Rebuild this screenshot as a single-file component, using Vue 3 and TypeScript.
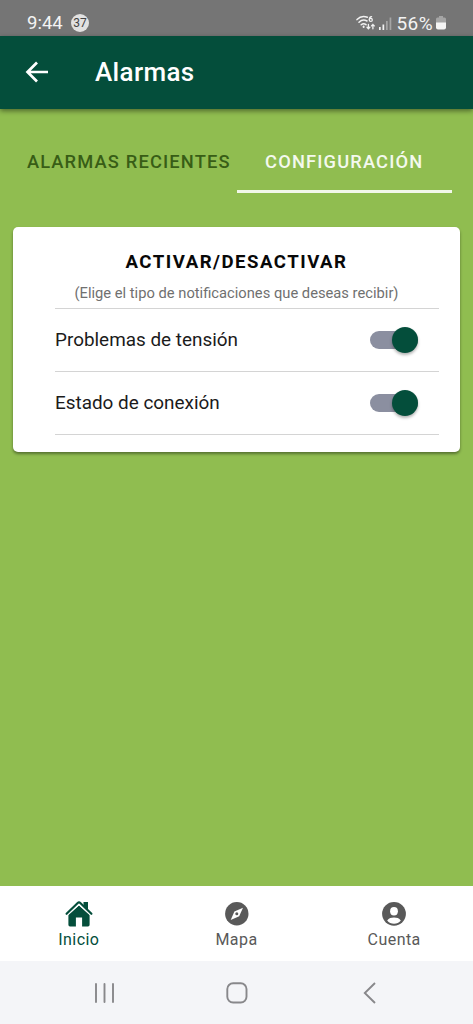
<script setup lang="ts">
import { ref } from 'vue'

interface Setting {
  id: string
  label: string
  enabled: boolean
}

const tabs = ['Alarmas recientes', 'Configuración']
const activeTab = ref(1)

const settings = ref<Setting[]>([
  { id: 'tension', label: 'Problemas de tensión', enabled: true },
  { id: 'conexion', label: 'Estado de conexión', enabled: true },
])

const navItems = [
  { id: 'home', label: 'Inicio' },
  { id: 'map', label: 'Mapa' },
  { id: 'account', label: 'Cuenta' },
]
const activeNav = ref('home')
</script>

<template>
  <div class="screen">
    <div class="status">
      <span class="clock">9:44</span>
      <span class="count">37</span>
      <svg class="wifi" width="20" height="16" viewBox="0 0 20 16" fill="none" stroke="#f2f2f2" stroke-width="1.5" stroke-linecap="round">
        <path d="M1 4.6C4 1.4 8 .9 11.4 2.3M3 7.3C5.400 4.900 8.700 4.700 11 6M5.200 9.800C6.600 8.600 8.600 8.600 10 9.700" />
        <path d="M7.600 11.600v.4" stroke-width="2" />
        <path d="M15.600 1.600C14.200 1.700 13.300 3 13.400 4.600" stroke-width="1.300" />
        <circle cx="14.800" cy="4.900" r="1.500" stroke-width="1.300" />
        <path d="M12.400 9.500v4M11 12.300l1.400 1.500 1.400-1.500M16.900 13.800v-4.300M15.500 10.900l1.400-1.500 1.400 1.500" stroke-width="1.300" />
      </svg>
      <svg class="signal" width="13" height="13" viewBox="0 0 13 13">
        <rect x="0" y="10" width="1.700" height="3" fill="#f2f2f2" />
        <rect x="3.500" y="7.500" width="1.700" height="5.500" fill="#f2f2f2" />
        <rect x="7" y="4" width="1.700" height="9" fill="#a5a5a5" />
        <rect x="10.600" y="0.500" width="1.700" height="12.500" fill="#a5a5a5" />
      </svg>
      <span class="percent">56%</span>
      <svg class="battery" width="10" height="14" viewBox="0 0 10 14">
        <path d="M3 0h4v1.500h1.500Q10 1.500 10 3v4H0V3Q0 1.500 1.500 1.500H3z" fill="#a5a5a5" />
        <path d="M0 6.500h10v5q0 2-2 2H2q-2 0-2-2z" fill="#f5f5f5" />
      </svg>
    </div>

    <header class="header">
      <svg class="back" width="24" height="22" viewBox="0 0 24 22" fill="none" stroke="#fff" stroke-width="2.700">
        <path d="M23 11H2.500M12 1.500L2.500 11l9.500 9.500" />
      </svg>
      <h1>Alarmas</h1>
    </header>

    <main class="content">
      <nav class="tabs">
        <button
          v-for="(tab, i) in tabs"
          :key="tab"
          class="tab"
          :class="{ active: i === activeTab }"
          @click="activeTab = i"
        >
          <span>{{ tab }}</span>
        </button>
      </nav>

      <section class="card">
        <h2>ACTIVAR/DESACTIVAR</h2>
        <p class="hint">(Elige el tipo de notificaciones que deseas recibir)</p>
        <div class="list">
          <div v-for="item in settings" :key="item.id" class="row">
            <span class="label">{{ item.label }}</span>
            <button
              class="toggle"
              :class="{ on: item.enabled }"
              role="switch"
              :aria-checked="item.enabled"
              @click="item.enabled = !item.enabled"
            >
              <span class="knob"></span>
            </button>
          </div>
        </div>
      </section>
    </main>

    <nav class="bottom">
      <button
        v-for="item in navItems"
        :key="item.id"
        class="nav-item"
        :class="{ active: item.id === activeNav }"
        @click="activeNav = item.id"
      >
        <svg v-if="item.id === 'home'" width="28" height="27" viewBox="0 0 28 27" fill="currentColor">
          <path d="M18.500 2h4.500v7.800l-4.500-3.900z" />
          <path d="M1.600 13.800L12.700 3Q14 1.800 15.300 3L26.400 13.800" fill="none" stroke="currentColor" stroke-width="2.200" stroke-linecap="round" />
          <path d="M3.400 14.800L14 5.400l10.600 9.400v10q0 1.600-1.600 1.600h-5.900v-8.900h-6.200v8.900H5q-1.600 0-1.600-1.600z" />
          <path d="M2.800 15.200L14 4.800l11.200 10.400" fill="none" stroke="#fff" stroke-width="0.900" />
        </svg>
        <svg v-else-if="item.id === 'map'" width="28" height="27" viewBox="0 0 28 27">
          <circle cx="13.800" cy="13.800" r="11.700" fill="currentColor" />
          <path d="M20 7.800l-3.800 8.400-8.500 3.700 3.700-8.500z" fill="#fff" />
          <circle cx="13.800" cy="13.800" r="1.500" fill="currentColor" />
        </svg>
        <svg v-else width="28" height="27" viewBox="0 0 28 27">
          <circle cx="14" cy="13.800" r="11.900" fill="currentColor" />
          <ellipse cx="14" cy="11.300" rx="3.900" ry="4.200" fill="#fff" />
          <path d="M7.200 20.400C8.800 18.200 11.300 17.500 14 17.500s5.200.7 6.800 2.900C19.100 22.500 16.700 23.700 14 23.700s-5.100-1.200-6.800-3.300z" fill="#fff" />
        </svg>
        <span>{{ item.label }}</span>
      </button>
    </nav>

    <div class="system">
      <svg width="22" height="20" viewBox="0 0 22 20" stroke="#88888b" stroke-width="1.900" stroke-linecap="round">
        <path d="M2 1v18M10.500 1v18M19 1v18" />
      </svg>
      <svg width="22" height="22" viewBox="0 0 22 22" fill="none" stroke="#88888b" stroke-width="1.900">
        <rect x="1.300" y="1.300" width="19.200" height="19.200" rx="5.800" />
      </svg>
      <svg width="13" height="22" viewBox="0 0 13 22" fill="none" stroke="#88888b" stroke-width="1.900">
        <path d="M12 1L1.800 11 12 21" />
      </svg>
    </div>
  </div>
</template>

<style>
body {
  margin: 0;
}
</style>

<style scoped>
.screen {
  display: flex;
  flex-direction: column;
  width: 473px;
  height: 1024px;
  overflow: hidden;
  background: #90bd50;
  font-family: Roboto, "Liberation Sans", sans-serif;
}
button {
  border: 0;
  margin: 0;
  padding: 0;
  background: none;
  font-family: inherit;
}
svg {
  display: block;
  flex: none;
}
.status {
  flex: none;
  display: flex;
  align-items: center;
  box-sizing: border-box;
  height: 35.500px;
  padding: 11px 27px 0;
  background: #757575;
  color: #f3f3f3;
  font-size: 18px;
  line-height: 24px;
}
.clock {
  width: 44px;
  font-size: 18.500px;
}
.count {
  width: 18px;
  height: 18px;
  border-radius: 50%;
  background: #e1e1e1;
  color: #444;
  font-size: 12px;
  line-height: 18px;
  text-align: center;
}
.wifi {
  margin-left: auto;
}
.signal {
  margin-left: 3px;
}
.percent {
  margin-left: 5px;
  width: 39px;
  padding-top: 1px;
  font-size: 19px;
  letter-spacing: 0.400px;
}
.battery {
  margin-right: 0.500px;
}
.header {
  flex: none;
  display: flex;
  align-items: center;
  height: 73.500px;
  background: #044e3b;
  color: #fff;
  box-shadow: 0 2px 5px rgba(0, 0, 0, 0.45);
}
.back {
  margin-left: 25px;
}
h1 {
  margin: 0 0 0 46px;
  font-size: 26px;
  font-weight: 500;
  letter-spacing: 0.350px;
}
.content {
  flex: 1;
}
.tabs {
  display: flex;
  margin: 21px 21px 0;
}
.tab {
  flex: 1;
  height: 63px;
  padding-top: 2px;
  border-bottom: 3px solid transparent;
  color: #385d16;
  font-size: 18.300px;
  font-weight: 500;
  letter-spacing: 1.150px;
  text-transform: uppercase;
  white-space: nowrap;
}
.tab.active {
  border-color: #f1f7e9;
  color: #f4f9ee;
}
.card {
  box-sizing: border-box;
  height: 225px;
  margin: 34px 13px 0;
  padding-top: 22px;
  border-radius: 5px;
  background: #fff;
  box-shadow: 0 2px 3px rgba(0, 0, 0, 0.4);
}
h2 {
  margin: 0;
  color: #080808;
  font-size: 18.600px;
  font-weight: 700;
  line-height: 26px;
  letter-spacing: 1.500px;
  text-align: center;
}
.hint {
  margin: 7px 0 0;
  color: #707070;
  font-size: 14.730px;
  line-height: 23px;
  text-align: center;
}
.list {
  margin: 3px 21px 0 42px;
  border-top: 1px solid #d4d4d4;
}
.row {
  display: flex;
  align-items: center;
  justify-content: space-between;
  height: 62px;
  padding-right: 21px;
  border-bottom: 1px solid #d4d4d4;
}
.label {
  padding-bottom: 2px;
  color: #1b1b1b;
  font-size: 18.900px;
}
.toggle {
  display: flex;
  align-items: center;
  width: 48px;
  height: 18px;
  border-radius: 9px;
  background: #c5c5cb;
}
.toggle.on {
  justify-content: flex-end;
  background: #8b8fa0;
}
.knob {
  flex: none;
  width: 26px;
  height: 26px;
  border-radius: 50%;
  background: #fff;
  box-shadow: 0 2px 3px rgba(0, 0, 0, 0.3);
}
.toggle.on .knob {
  background: #044e3b;
}
.bottom {
  flex: none;
  display: flex;
  height: 75px;
  background: #fff;
}
.nav-item {
  flex: 1;
  display: flex;
  flex-direction: column;
  align-items: center;
  gap: 1px;
  padding-top: 14px;
  color: #595959;
  font-size: 16px;
  line-height: 24px;
  letter-spacing: 0.450px;
}
.nav-item.active {
  color: #044e3b;
}
.system {
  flex: none;
  display: flex;
  align-items: center;
  justify-content: space-between;
  box-sizing: border-box;
  height: 63px;
  padding: 0 97px 0 94px;
  background: #f4f5f8;
}
.system svg:nth-child(2) {
  margin-right: 5px;
}
</style>
